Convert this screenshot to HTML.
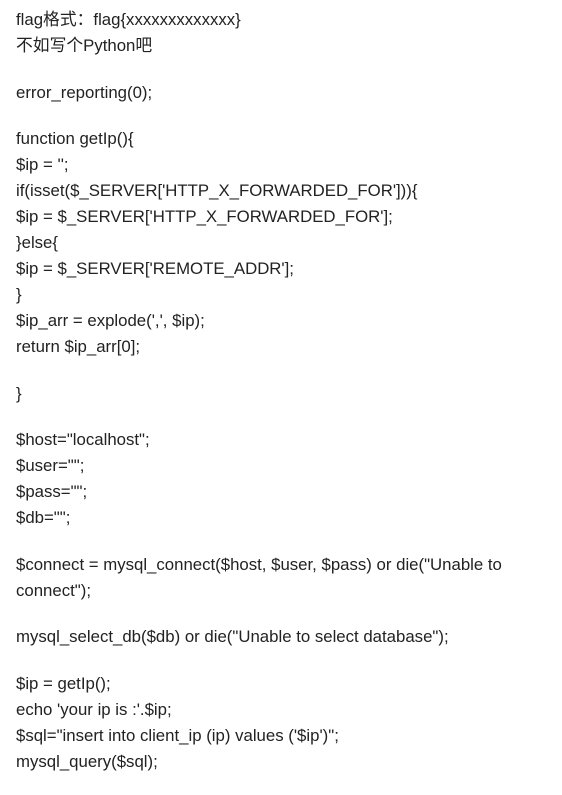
<!DOCTYPE html>
<html><head><meta charset="utf-8"><style>
html,body{margin:0;padding:0;background:#fff;}
body{width:562px;height:786px;overflow:hidden;font-family:"Liberation Sans","Noto Sans CJK SC",sans-serif;font-size:16.8px;line-height:26px;color:#222;}
.c{position:absolute;left:16px;top:7px;width:540px;}
p{margin:0 0 20.5px 0;white-space:nowrap;}
</style></head><body><div class="c">
<p>flag格式：flag{xxxxxxxxxxxxx}<br>不如写个Python吧</p>
<p>error_reporting(0);</p>
<p>function getIp(){<br>$ip = '';<br>if(isset($_SERVER['HTTP_X_FORWARDED_FOR'])){<br>$ip = $_SERVER['HTTP_X_FORWARDED_FOR'];<br>}else{<br>$ip = $_SERVER['REMOTE_ADDR'];<br>}<br>$ip_arr = explode(',', $ip);<br>return $ip_arr[0];</p>
<p>}</p>
<p>$host="localhost";<br>$user="";<br>$pass="";<br>$db="";</p>
<p>$connect = mysql_connect($host, $user, $pass) or die("Unable to<br>connect");</p>
<p>mysql_select_db($db) or die("Unable to select database");</p>
<p>$ip = getIp();<br>echo 'your ip is :'.$ip;<br>$sql="insert into client_ip (ip) values ('$ip')";<br>mysql_query($sql);</p>
</div></body></html>
